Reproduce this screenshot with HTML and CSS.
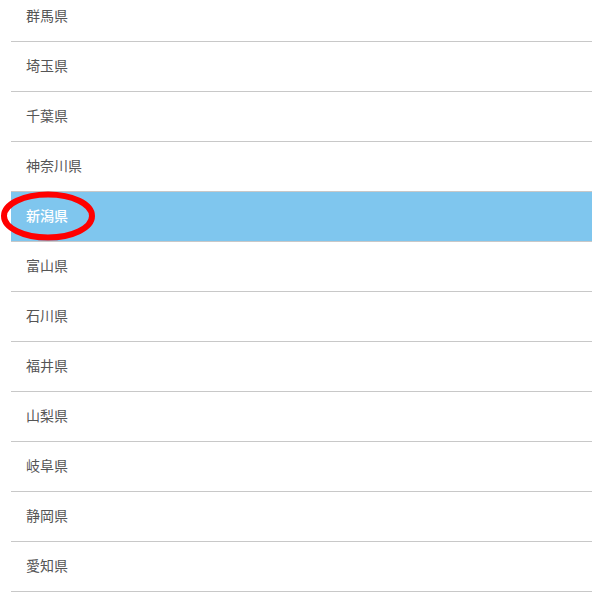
FILE: index.html
```html
<!DOCTYPE html>
<html lang="ja">
<head>
  <meta charset="UTF-8">
  <meta name="viewport" content="width=device-width, initial-scale=1">
  <title>都道府県</title>
  <link rel="stylesheet" href="styles.css">
</head>
<body>
  <!-- Prefecture list -->
  <ul class="pref-list">
    <li class="pref-item">群馬県</li>
    <li class="pref-item">埼玉県</li>
    <li class="pref-item">千葉県</li>
    <li class="pref-item">神奈川県</li>
    <li class="pref-item selected">
      新潟県
      <svg class="marker" width="98" height="54" viewBox="0 0 98 54" aria-hidden="true">
        <ellipse cx="48" cy="26" rx="44" ry="21.5" fill="none" stroke="#f00" stroke-width="6"/>
      </svg>
    </li>
    <li class="pref-item">富山県</li>
    <li class="pref-item">石川県</li>
    <li class="pref-item">福井県</li>
    <li class="pref-item">山梨県</li>
    <li class="pref-item">岐阜県</li>
    <li class="pref-item">静岡県</li>
    <li class="pref-item">愛知県</li>
  </ul>
</body>
</html>
```

FILE: styles.css
```css
* {
  margin: 0;
  padding: 0;
  box-sizing: border-box;
}

html, body {
  height: 100%;
  overflow: hidden;
  background: #fff;
  font-family: "Open Sans", "Noto Sans CJK JP", sans-serif;
}

/* === LIST === */
.pref-list {
  list-style: none;
  margin: -8px 0 0 11px;
}

.pref-item {
  position: relative;
  height: 50px;
  padding: 0 0 3px 15px;
  display: flex;
  align-items: center;
  font-size: 14px;
  color: #555;
  border-bottom: 1px solid #c8c8c8;
}

.pref-item.selected {
  background: #7fc6ee;
  color: #fff;
  font-weight: 500;
}

.marker {
  position: absolute;
  left: -11px;
  top: -2px;
}
```
